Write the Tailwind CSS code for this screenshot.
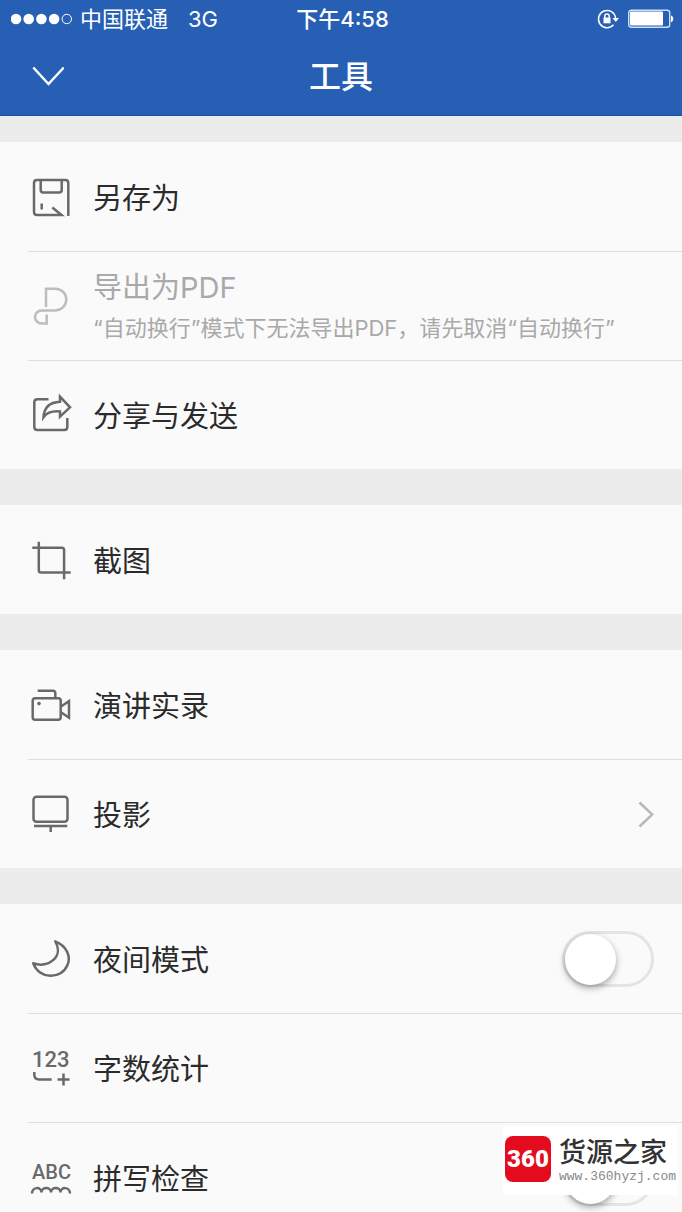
<!DOCTYPE html>
<html lang="zh-CN">
<head>
<meta charset="utf-8">
<meta name="viewport" content="width=device-width, initial-scale=1">
<title>工具</title>
<script src="https://cdn.jsdelivr.net/npm/@tailwindcss/browser@4"></script>
</head>
<body class="flex h-screen flex-col overflow-hidden bg-[#ececec] font-['Inter','Noto_Sans_CJK_SC',sans-serif] text-[#2b2b2b]">
<header class="shrink-0 border-b border-[#1d4f97] bg-[#265fb3] text-white">
  <!-- Status bar -->
  <div class="grid h-[38px] grid-cols-[1fr_auto_1fr] items-center pr-2 pl-[11px] text-[22px] leading-none">
    <div class="flex items-center">
      <svg class="mr-2 h-3 w-[61px]" viewBox="0 0 61 12" fill="#fff" aria-hidden="true"><circle cx="5" cy="6" r="5.3"/><circle cx="17.7" cy="6" r="5.3"/><circle cx="30.4" cy="6" r="5.3"/><circle cx="43.1" cy="6" r="5.3"/><circle cx="55.8" cy="6" r="4.7" fill="none" stroke="#fff"/></svg>
      <span>中国联通</span><span class="ml-5">3G</span>
    </div>
    <span class="font-medium">下午4:58</span>
    <div class="flex items-center justify-end gap-2">
      <svg class="h-6 w-6" viewBox="0 0 24 24" fill="none" stroke="#fff" stroke-width="1.5" aria-hidden="true"><path d="M17.5 17.8A8.6 8.6 0 1 1 19.6 11"/><path d="M16.5 11h6.5l-3.2 4z" fill="#fff" stroke="none"/><rect x="7.5" y="10.5" width="7" height="5.8" fill="#fff" stroke="none"/><path d="M8.8 11V9.3a2.2 2.2 0 0 1 4.400 0V11"/></svg>
      <svg class="h-5 w-[46px]" viewBox="0 0 46 20" aria-hidden="true"><rect x=".7" y="1.2" width="41" height="17" rx="2.500" fill="none" stroke="#cfe0f5" stroke-width="1.4"/><rect x="2" y="2.500" width="33" height="14" rx="1" fill="#fff"/><path d="M43 6.500c3 .8 3 6 0 6.800z" fill="#fff"/></svg>
    </div>
  </div>
  <div class="grid h-[77px] grid-cols-[1fr_auto_1fr] items-center px-8">
    <button type="button" aria-label="收起" class="w-8"><svg class="h-8 w-8" viewBox="0 0 32 32" fill="none" stroke="#fff" stroke-width="2.500" aria-hidden="true"><path d="M1.300 6.500 16.500 23 31.800 6.500"/></svg></button>
    <h1 class="text-[32px] leading-none font-medium">工具</h1>
  </div>
</header>

<main class="min-h-0 flex-1 overflow-y-auto pt-[26px] text-[29px] leading-10 [scrollbar-width:none]">
  <div class="flex flex-col gap-9">
    <ul class="divide-y divide-[#dedede] bg-[#fafafa] pl-7">
      <li>
        <button type="button" class="flex h-[109px] w-full items-center gap-[21px] pl-1 text-left">
          <svg class="size-10 shrink-0" viewBox="0 0 40 40" fill="none" stroke="#69696c" stroke-width="2.500" aria-hidden="true"><path d="M36.300 39V6q0-3-3-3H5Q2 3 2 6v29q0 3 3 3h24.500L20.300 30.500M8.700 3v10q0 2.500 2.500 2.500h16q2.500 0 2.500-2.500V3M9.700 26.500v6"/></svg>
          <span class="pt-1">另存为</span>
        </button>
      </li>
      <li>
        <button type="button" disabled class="flex h-[108px] w-full items-center gap-[21px] pl-1 text-left text-[#a9a9a9]">
          <svg class="size-10 shrink-0" viewBox="0 0 40 40" fill="none" stroke="#bdbdbd" stroke-width="2.500" aria-hidden="true"><path d="M14 21V2.800h9.500a10.800 10.800 0 0 1 0 21.600H9.500a6.500 6.500 0 0 0 0 13h5.200V28.500"/></svg>
          <span class="flex flex-col pt-1"><span>导出为PDF</span><span class="text-[22px]">“自动换行”模式下无法导出PDF，请先取消“自动换行”</span></span>
        </button>
      </li>
      <li>
        <button type="button" class="flex h-[108px] w-full items-center gap-[21px] pl-1 text-left">
          <svg class="size-10 shrink-0 overflow-visible" viewBox="0 0 40 40" fill="none" stroke="#69696c" stroke-width="2.500" aria-hidden="true"><path d="M16.500 4.300H5.300q-3 0-3 3V32q0 3 3 3h27q3 0 3-3v-9"/><path d="M28 1.700 38 12.300 28 21.700v-5.200C20.500 15.800 15 17.500 11.500 22.300 12 12.500 18 7.200 28 6.700z"/></svg>
          <span class="pt-1">分享与发送</span>
        </button>
      </li>
    </ul>

    <ul class="bg-[#fafafa] pl-7">
      <li>
        <button type="button" class="flex h-[109px] w-full items-center gap-[21px] pl-1 text-left">
          <svg class="size-10 shrink-0" viewBox="0 0 40 40" fill="none" stroke="#69696c" stroke-width="2.500" aria-hidden="true"><path d="M6.800 1.700v28.600q0 2.300 2.300 2.300H38.700M.3 7.700h29.500q2.300 0 2.300 2.300v29.300"/></svg>
          <span class="pt-1">截图</span>
        </button>
      </li>
    </ul>

    <ul class="divide-y divide-[#dedede] bg-[#fafafa] pl-7">
      <li>
        <button type="button" class="flex h-[109px] w-full items-center gap-[21px] pl-1 text-left">
          <svg class="size-10 shrink-0 overflow-visible" viewBox="0 0 40 40" fill="none" stroke="#69696c" stroke-width="2.500" aria-hidden="true"><rect x=".7" y="13.300" width="28" height="21.400" rx="2.500"/><path d="M5.700 5.700H21q2.300 0 2.300 2.300v5.300M29 21.500l8-5.300v16.500l-8-5.400"/><circle cx="7" cy="18.600" r="1.800" fill="#69696c" stroke="none"/></svg>
          <span class="pt-1">演讲实录</span>
        </button>
      </li>
      <li>
        <button type="button" class="flex h-[108px] w-full items-center gap-[21px] pr-7 pl-1 text-left">
          <svg class="size-10 shrink-0" viewBox="0 0 40 40" fill="none" stroke="#69696c" stroke-width="2.500" aria-hidden="true"><rect x="1.500" y="2.700" width="34" height="25" rx="3"/><path d="M2 32h33.300M18.700 32v6"/></svg>
          <span class="flex-1 pt-1">投影</span>
          <svg class="h-7 w-4" viewBox="0 0 16 28" fill="none" stroke="#b8b8b8" stroke-width="2.500" aria-hidden="true"><path d="M1.500 2.500 14.300 14.500 1.500 26.500"/></svg>
        </button>
      </li>
    </ul>

    <ul class="divide-y divide-[#dedede] bg-[#fafafa] pl-7">
      <li class="flex h-[110px] items-center gap-[21px] pr-7 pl-1">
        <svg class="size-10 shrink-0" viewBox="0 0 40 40" fill="none" stroke="#69696c" stroke-width="2.500" stroke-linejoin="round" aria-hidden="true"><path d="M23.300 2.300C34 6.500 39.500 17 35.500 26 29.500 40.500 7.500 41 1.200 24.300 17 30 32 17 23.300 2.300z"/></svg>
        <label for="night" class="flex-1 pt-1">夜间模式</label>
        <input id="night" type="checkbox" role="switch" class="h-14 w-[92px] appearance-none rounded-full border-[3px] border-[#e4e4e4] bg-[#fafafa] before:block before:size-[51px] before:rounded-full before:bg-white before:shadow-[0_3px_7px_rgba(0,0,0,0.35)] checked:bg-[#265fb3]">
      </li>
      <li>
        <button type="button" class="flex h-[108px] w-full items-center gap-[21px] pl-1 text-left">
          <svg class="size-10 shrink-0 overflow-visible" viewBox="0 0 40 40" fill="none" stroke="#69696c" stroke-width="2.500" aria-hidden="true"><text x="0" y="18.500" fill="#69696c" stroke="none" class="font-['Roboto',sans-serif] text-[22px] font-medium">123</text><path d="M2.300 24v2.500q0 5 5 5h12.400M25.500 31.500h12M31.500 25.500v12"/></svg>
          <span class="pt-1">字数统计</span>
        </button>
      </li>
      <li class="flex h-[109px] items-center gap-[21px] pr-7 pl-1">
        <svg class="size-10 shrink-0 overflow-visible" viewBox="0 0 40 40" fill="none" stroke="#69696c" stroke-width="2.500" aria-hidden="true"><text x="0" y="21" fill="#69696c" stroke="none" class="font-['Roboto',sans-serif] text-[20px] font-medium">ABC</text><path d="M0 35.500c0-7 9.500-7 9.500-1 0-6 9.500-6 9.500 0 0-6 9.500-6 9.500 0 0-6 9.500-6 9.500 1"/></svg>
        <label for="spell" class="flex-1 pt-1">拼写检查</label>
        <input id="spell" type="checkbox" role="switch" class="h-14 w-[92px] appearance-none rounded-full border-[3px] border-[#e4e4e4] bg-[#fafafa] before:block before:size-[51px] before:rounded-full before:bg-white before:shadow-[0_3px_7px_rgba(0,0,0,0.35)] checked:bg-[#265fb3]">
      </li>
    </ul>
  </div>
</main>

<!-- Site badge floating over the list -->
<aside class="fixed right-1 bottom-[17px] flex h-[69px] items-center gap-2 bg-white pb-1 pl-[2px]">
  <div class="flex size-[46px] items-center justify-center rounded-lg bg-[#e50b1e] font-['Roboto',sans-serif] text-[24px] leading-none font-black text-white">360</div>
  <div class="flex flex-col pt-1 pr-[2px]">
    <span class="text-[27px] leading-8 font-medium text-[#333]">货源之家</span>
    <span class="font-['Liberation_Mono',monospace] text-[13px] leading-4 text-[#888]">www.360hyzj.com</span>
  </div>
</aside>
</body>
</html>
